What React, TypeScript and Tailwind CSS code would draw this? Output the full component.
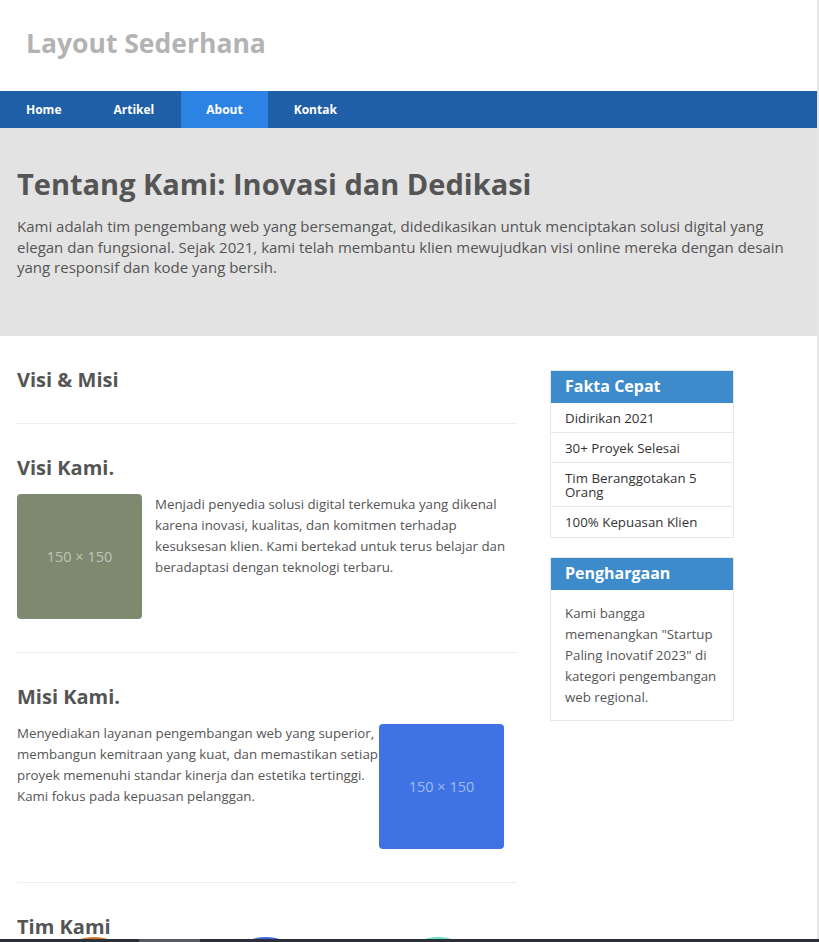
const font = { fontFamily: '"Open Sans", "Liberation Sans", sans-serif' };

const navItems = ["Home", "Artikel", "About", "Kontak"];

const facts = ["Didirikan 2021", "30+ Proyek Selesai", "Tim Beranggotakan 5 Orang", "100% Kepuasan Klien"];

function Placeholder({ color }: { color: string }) {
  return (
    <div className={`w-[125px] h-[125px] shrink-0 rounded-[4px] flex items-center justify-center text-[14.5px] text-white/50 ${color}`}>
      150 × 150
    </div>
  );
}

export default function App() {
  return (
    <div className="flex bg-white text-[#555]" style={font}>
      <div className="w-[817px] h-[942px] overflow-hidden">
        <header className="h-[91px] flex items-center px-[26px]">
          <h1 className="text-[26.5px] font-bold text-[#b3b3b3] mb-[4px]">Layout Sederhana</h1>
        </header>

        <nav className="h-[37px] bg-[#1f5fa8] flex">
          {navItems.map((item) => (
            <a
              key={item}
              className={`h-full flex items-center text-[12px] font-bold text-white ${
                item === "About" ? "bg-[#2d83e4] px-[25px] ml-[1px]" : "px-[26px]"
              }`}
            >
              {item}
            </a>
          ))}
        </nav>

        <section className="bg-[#e3e3e3] h-[208px] px-[17px] pt-[36px]">
          <h1 className="text-[29px] font-bold leading-[40px] text-[#555]">Tentang Kami: Inovasi dan Dedikasi</h1>
          <p className="mt-[12px] text-[15px] leading-[20.5px] text-[#555] max-w-[790px]">
            Kami adalah tim pengembang web yang bersemangat, didedikasikan untuk menciptakan solusi digital yang
            elegan dan fungsional. Sejak 2021, kami telah membantu klien mewujudkan visi online mereka dengan desain
            yang responsif dan kode yang bersih.
          </p>
        </section>

        <main className="flex gap-[33px] px-[17px] pt-[32px]">
          <div className="w-[500px] shrink-0">
            <h2 className="text-[20px] font-bold leading-[24px]">Visi &amp; Misi</h2>
            <hr className="mt-[31px] border-[#eee]" />

            <h2 className="mt-[32px] text-[20px] font-bold leading-[24px]">Visi Kami.</h2>
            <div className="flex gap-[13px] mt-[14px]">
              <Placeholder color="bg-[#7d8a70]" />
              <p className="text-[13.3px] leading-[21px] text-[#555]">
                Menjadi penyedia solusi digital terkemuka yang dikenal karena inovasi, kualitas, dan komitmen terhadap
                kesuksesan klien. Kami bertekad untuk terus belajar dan beradaptasi dengan teknologi terbaru.
              </p>
            </div>
            <hr className="mt-[33px] border-[#eee]" />

            <h2 className="mt-[32px] text-[20px] font-bold leading-[24px]">Misi Kami.</h2>
            <div className="flex mt-[15px]">
              <p className="text-[13.3px] leading-[21px] text-[#555] w-[362px] mt-[-1px]">
                Menyediakan layanan pengembangan web yang superior, membangun kemitraan yang kuat, dan memastikan setiap
                proyek memenuhi standar kinerja dan estetika tertinggi. Kami fokus pada kepuasan pelanggan.
              </p>
              <Placeholder color="bg-[#3f73e3]" />
            </div>
            <hr className="mt-[33px] border-[#eee]" />

            <h2 className="mt-[32px] text-[20px] font-bold leading-[24px]">Tim Kami</h2>
            <div className="flex gap-[72px] pl-[27px] mt-[-2px]">
              <div className="w-[100px] h-[100px] rounded-full bg-[#d9772a]" />
              <div className="w-[100px] h-[100px] rounded-full bg-[#3f6de0]" />
              <div className="w-[100px] h-[100px] rounded-full bg-[#6ee0c8]" />
            </div>
          </div>

          <aside className="w-[184px] shrink-0 flex flex-col gap-[19px] pt-[2px]">
            <div className="border border-[#e8e8e8]">
              <h3 className="bg-[#3d8bcb] text-white text-[16px] font-bold h-[32px] flex items-center px-[14px] pb-[2px]">
                Fakta Cepat
              </h3>
              <ul className="text-[13.3px] text-[#333]">
                {facts.map((f) => (
                  <li key={f} className="border-b border-[#e8e8e8] last:border-b-0 px-[14px] py-[7.5px] leading-[14px] min-h-[30px] flex items-center">
                    {f}
                  </li>
                ))}
              </ul>
            </div>

            <div className="border border-[#e8e8e8]">
              <h3 className="bg-[#3d8bcb] text-white text-[16px] font-bold h-[32px] flex items-center px-[14px] pb-[2px]">
                Penghargaan
              </h3>
              <p className="px-[14px] pt-[13px] pb-[12px] text-[13.3px] leading-[21px] text-[#555]">
                Kami bangga memenangkan "Startup Paling Inovatif 2023" di kategori pengembangan web regional.
              </p>
            </div>
          </aside>
        </main>
      </div>
      <div className="w-[2px] h-[942px] bg-[#e6e6e6]" />

      <div className="fixed bottom-0 left-0 w-full h-[3px] bg-[#2b3038] flex">
        <div className="ml-[139px] w-[61px] h-full bg-[#555a63]" />
      </div>
    </div>
  );
}
